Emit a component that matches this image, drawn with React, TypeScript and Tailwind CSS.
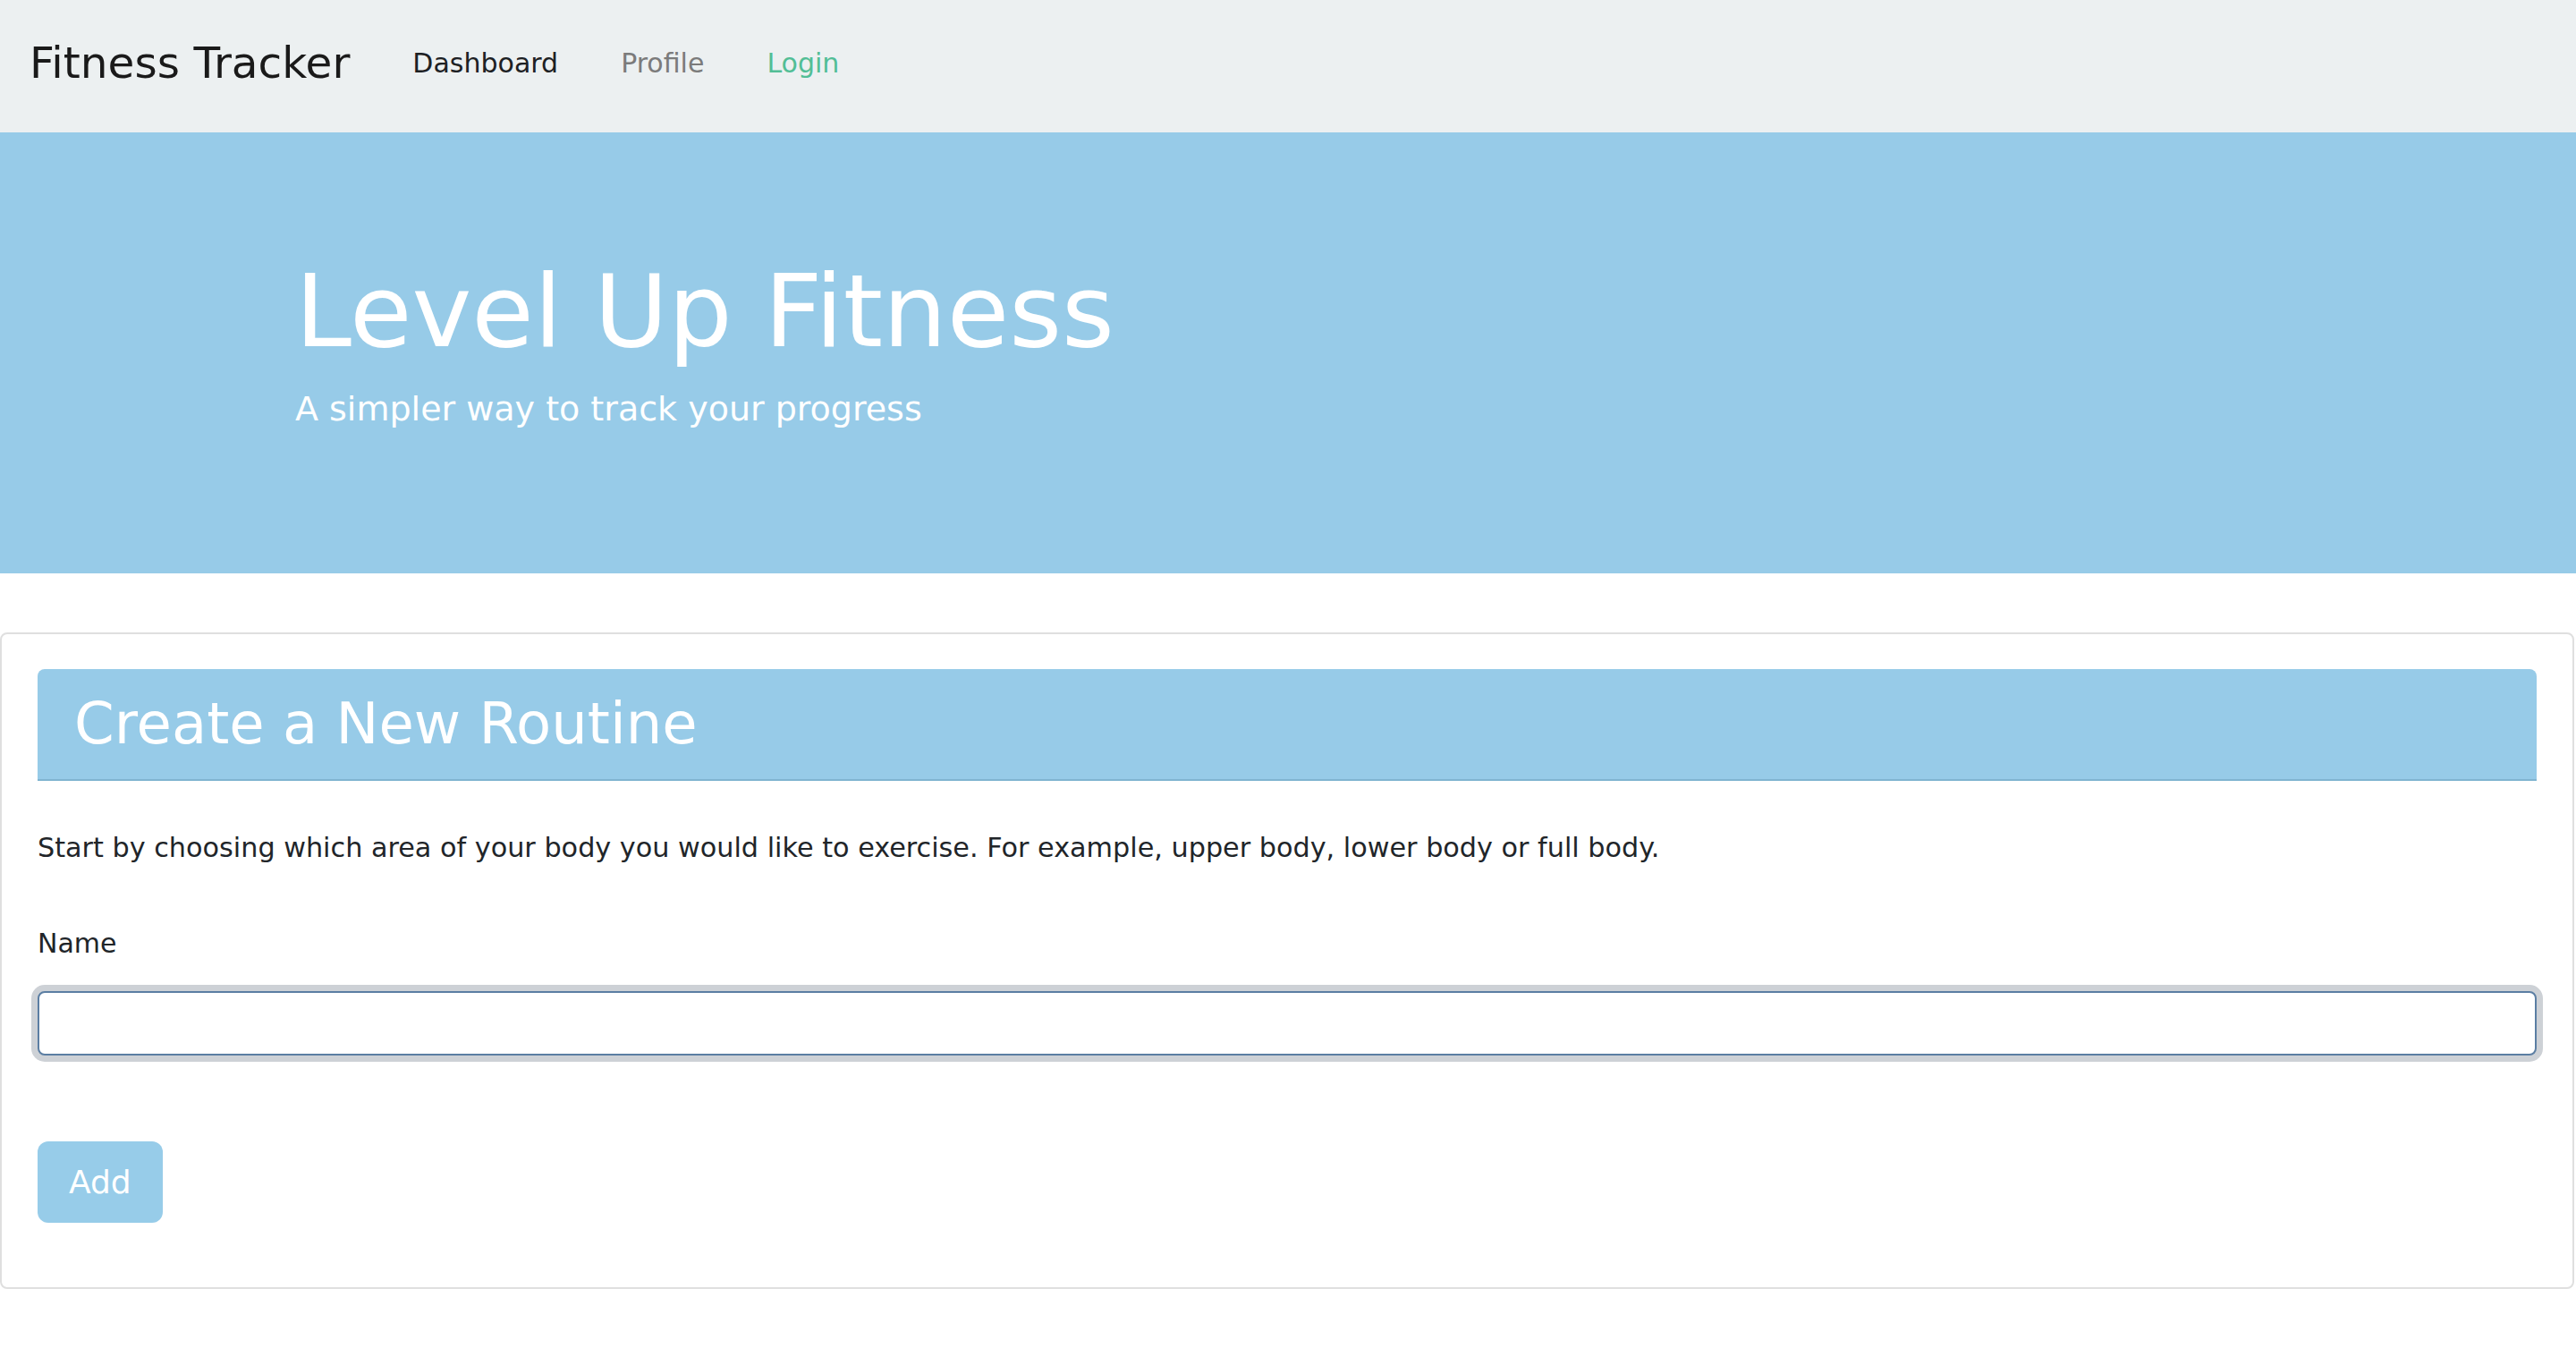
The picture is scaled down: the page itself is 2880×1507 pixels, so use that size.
import React from 'react';

// Simple fitness tracker page: navbar, hero banner and a "new routine" card
const navLinks = [
  { label: 'Dashboard', className: 'text-[#1d2124]' },
  { label: 'Profile', className: 'text-[#7b7b7b]' },
  { label: 'Login', className: 'text-[#52be96]' },
];

export default function App() {
  return (
    <div className="min-h-screen bg-white font-['DejaVu_Sans',_Verdana,_sans-serif] text-[#212529]">
      {/* Navbar */}
      <nav className="flex h-[148px] items-center bg-[#ecf0f1] pl-[33px] pb-[8px]">
        <a className="mr-[35px] text-[48.5px] leading-[1.2] text-[#1a1a1a]">Fitness Tracker</a>
        <ul className="flex items-center">
          {navLinks.map((link) => (
            <li key={link.label}>
              <a className={`block px-[35px] text-[30px] leading-[1.5] ${link.className}`}>{link.label}</a>
            </li>
          ))}
        </ul>
      </nav>

      {/* Hero */}
      <header className="h-[493px] bg-[#97cbe8]">
        <div className="mx-auto w-[2280px] px-[30px] pt-[133px]">
          <h1 className="text-[113px] leading-[1.2] text-white">Level Up Fitness</h1>
          <p className="mt-[12px] text-[38px] leading-[1.5] text-white">A simpler way to track your progress</p>
        </div>
      </header>

      {/* Routine card */}
      <section className="mt-[66px] mr-[2px] rounded-[8px] border-2 border-[#dfdfdf] px-[40px] pt-[39px] pb-[72px]">
        <div className="flex h-[125px] items-center rounded-t-[8px] border-b-2 border-[#80b4d0] bg-[#97cbe8] px-[41px]">
          <h2 className="text-[64px] leading-[1.2] text-white">Create a New Routine</h2>
        </div>

        <p className="mt-[52px] text-[30.25px] leading-[1.5]">
          Start by choosing which area of your body you would like to exercise. For example, upper body, lower body or full body.
        </p>

        <form className="mt-[62px]" onSubmit={(e) => e.preventDefault()}>
          <label htmlFor="routine-name" className="block text-[30px] leading-[1.5]">
            Name
          </label>
          <input
            id="routine-name"
            type="text"
            className="mt-[31px] block h-[72px] w-full rounded-[8px] border-2 border-[#5b7ea3] bg-white px-[24px] text-[30px] shadow-[0_0_0_7px_#cdd1d6] outline-none"
          />
          <button
            type="submit"
            className="mt-[96px] flex h-[91px] items-center rounded-[12px] bg-[#97cce9] px-[35px] text-[36px] leading-[1.5] text-white"
          >
            Add
          </button>
        </form>
      </section>
    </div>
  );
}
